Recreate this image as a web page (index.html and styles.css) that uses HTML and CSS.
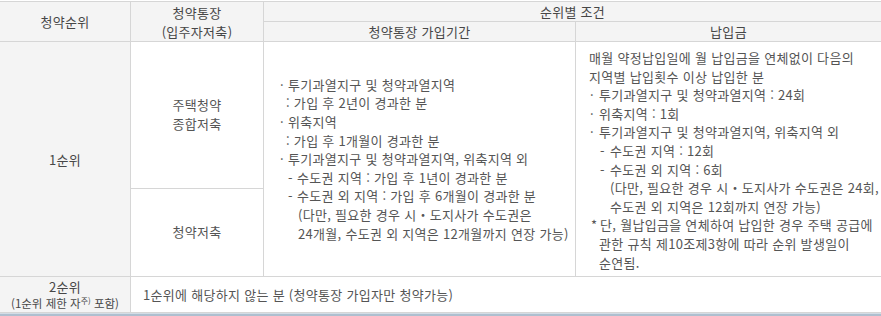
FILE: index.html
```html
<!DOCTYPE html>
<html lang="ko">
<head>
<meta charset="utf-8">
<title>청약순위</title>
<link rel="stylesheet" href="styles.css">
</head>
<body>
<table class="grid">
  <colgroup>
    <col class="col-rank">
    <col class="col-acct">
    <col class="col-period">
    <col class="col-pay">
  </colgroup>
  <thead>
    <tr class="hrow hrow-1">
      <th rowspan="2">청약순위</th>
      <th rowspan="2" class="acct-head">청약통장<br>(입주자저축)</th>
      <th colspan="2" class="last">순위별 조건</th>
    </tr>
    <tr class="hrow hrow-2">
      <th>청약통장 가입기간</th>
      <th class="last">납입금</th>
    </tr>
  </thead>
  <tbody>
    <tr class="brow brow-1">
      <td rowspan="2" class="rank">1순위</td>
      <td class="acct">주택청약<br>종합저축</td>
      <td rowspan="2" class="period">
        <div class="ln"><span class="mk">·</span>투기과열지구 및 청약과열지역</div>
        <div class="ln colon">: 가입 후 2년이 경과한 분</div>
        <div class="ln"><span class="mk">·</span>위축지역</div>
        <div class="ln colon">: 가입 후 1개월이 경과한 분</div>
        <div class="ln"><span class="mk">·</span>투기과열지구 및 청약과열지역, 위축지역 외</div>
        <div class="ln dash"><span class="mk mk-d">-</span>수도권 지역 : 가입 후 1년이 경과한 분</div>
        <div class="ln dash"><span class="mk mk-d">-</span>수도권 외 지역 : 가입 후 6개월이 경과한 분</div>
        <div class="ln paren">(다만, 필요한 경우 시・도지사가 수도권은<br>24개월, 수도권 외 지역은 12개월까지 연장 가능)</div>
      </td>
      <td rowspan="2" class="pay last">
        <div class="ln">매월 약정납입일에 월 납입금을 연체없이 다음의<br>지역별 납입횟수 이상 납입한 분</div>
        <div class="ln bul"><span class="mk">·</span>투기과열지구 및 청약과열지역 : 24회</div>
        <div class="ln bul"><span class="mk">·</span>위축지역 : 1회</div>
        <div class="ln bul"><span class="mk">·</span>투기과열지구 및 청약과열지역, 위축지역 외</div>
        <div class="ln dash"><span class="mk mk-d">-</span>수도권 지역 : 12회</div>
        <div class="ln dash"><span class="mk mk-d">-</span>수도권 외 지역 : 6회</div>
        <div class="ln paren">(다만, 필요한 경우 시・도지사가 수도권은 24회,<br>수도권 외 지역은 12회까지 연장 가능)</div>
        <div class="ln star"><span class="mk">*</span>단, 월납입금을 연체하여 납입한 경우 주택 공급에<br>관한 규칙 제10조제3항에 따라 순위 발생일이<br>순연됨.</div>
      </td>
    </tr>
    <tr class="brow brow-2">
      <td class="acct">청약저축</td>
    </tr>
    <tr class="brow brow-3">
      <td class="rank rank-2">2순위<br><span class="rank-note">(1순위 제한 자<sup>주)</sup> 포함)</span></td>
      <td colspan="3" class="note last">1순위에 해당하지 않는 분 (청약통장 가입자만 청약가능)</td>
    </tr>
  </tbody>
</table>
<div class="bar"></div>
</body>
</html>
```

FILE: styles.css
```css
html, body {
  margin: 0;
  padding: 0;
  background: #ffffff;
}
body {
  padding-top: 1px;
  font-family: "Noto Sans CJK KR", "Noto Sans", sans-serif;
  font-size: 13px;
  letter-spacing: 0.3px;
  color: #555555;
}
.grid {
  width: 881px;
  table-layout: fixed;
  border-collapse: separate;
  border-spacing: 0;
  border-top: 1px solid #d6d6d6;
}
.col-rank { width: 131px; }
.col-acct { width: 133px; }
.col-period { width: 312px; }
.col-pay { width: 305px; }

.grid th,
.grid td {
  padding: 0;
  border-right: 1px solid #d6d6d6;
  border-bottom: 1px solid #d6d6d6;
  vertical-align: middle;
}
.grid .last { border-right: none; }

.grid th {
  background: #f4f4f4;
  font-weight: normal;
  color: #474747;
  text-align: center;
  line-height: 19px;
}
.hrow-1 { height: 20px; }
.hrow-2 { height: 20px; }
.brow-1 { height: 147px; }
.brow-2 { height: 88px; }
.brow-3 { height: 36px; }

.grid .rank {
  background: #f4f4f4;
  text-align: center;
  color: #474747;
  line-height: 17px;
}
.grid .rank-2 {
  line-height: 16px;
  padding-top: 1px;
}
.rank-note {
  font-size: 11.5px;
  letter-spacing: 0;
}
.rank-note sup {
  font-size: 8px;
  line-height: 0;
  vertical-align: 4px;
}
.grid .acct {
  text-align: center;
  line-height: 18.8px;
}

.ln {
  line-height: 18.6px;
  white-space: nowrap;
}
.mk {
  display: inline-block;
  width: 8px;
}
.mk-d { width: 9px; }

.grid .period {
  padding-left: 16px;
  padding-top: 1px;
}
.period .colon { padding-left: 6px; }
.period .dash { padding-left: 8px; }
.period .paren { padding-left: 18px; }

.grid .pay {
  vertical-align: top;
  padding-left: 13px;
  padding-top: 7px;
}
.pay .bul { padding-left: 1px; }
.pay .bul .mk { width: 9px; }
.pay .dash { padding-left: 11px; }
.pay .dash .mk-d { width: 10px; }
.pay .paren { padding-left: 21px; }
.pay .star {
  padding-left: 10px;
  text-indent: -8px;
}
.pay .star .mk {
  width: 9px;
  text-indent: 0;
}

.grid .note {
  padding-left: 12px;
}

.bar {
  width: 881px;
  height: 3px;
  background: #aebfcf;
  border-top: 1px solid #d3dde6;
}
```
